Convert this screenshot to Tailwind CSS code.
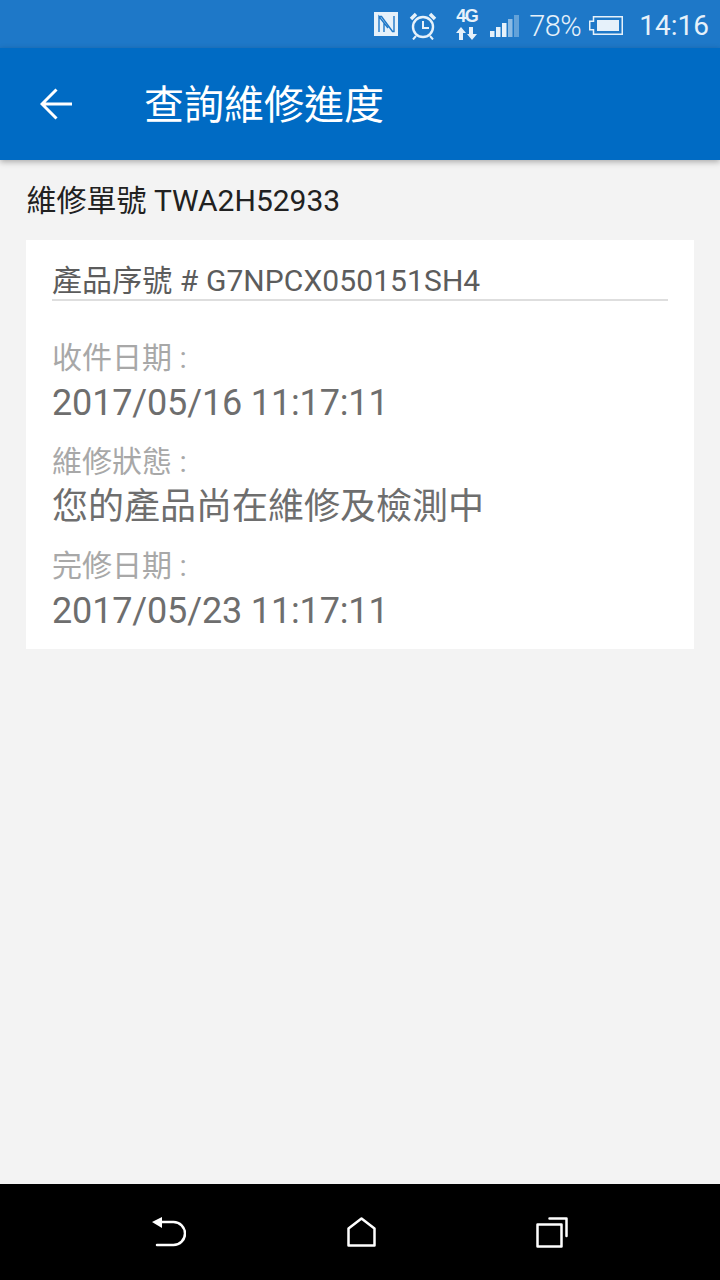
<!DOCTYPE html>
<html lang="zh-Hant">
  <head>
    <meta charset="UTF-8" />
    <meta name="viewport" content="width=device-width, initial-scale=1.0" />
    <title>查詢維修進度</title>
    <script src="https://cdn.jsdelivr.net/npm/@tailwindcss/browser@4"></script>
  </head>
  <body class="bg-[#f3f3f3] font-['Roboto','Noto_Sans_CJK_TC',sans-serif]">
    <div class="flex flex-col w-[720px] h-[1280px] overflow-hidden">
      <!-- status bar -->
      <div class="h-12 bg-[#1e78c8] flex items-center justify-end text-[#e6f1fa] shrink-0">
        <svg class="w-6 h-6 mr-[11px]" viewBox="0 0 24 24" fill="none">
          <path fill="currentColor" d="M0 0h24v24H0z" />
          <path stroke="#1e78c8" stroke-width="1.400" d="M5 20V4.500l9 11.500M5 4.500h2.500l11 15H20V4M10 20V11" />
        </svg>
        <svg class="w-7 h-7 mr-[19px] mt-1" viewBox="0 0 28 28" fill="none" stroke="currentColor">
          <circle cx="14" cy="15" r="10" stroke-width="2.400" />
          <path stroke-width="2" d="M14 9v7h6M7 24l-3 3.500M21 24l3 3.500" />
          <path stroke-width="3.500" d="M2 7l5-5M26 7l-5-5" />
        </svg>
        <div class="flex flex-col items-center w-[21px] mr-[13px] gap-1 mt-[2px]">
          <span class="text-[18px] leading-[13px] font-bold font-['Liberation_Sans'] tracking-[-1.5px]">4G</span>
          <svg class="w-[21px] h-[13px]" viewBox="0 0 21 13" fill="currentColor">
            <path d="M5 0l5 6H7v7H3V6H0zM13 0h4v7h4l-5 6-5-6h2z" />
          </svg>
        </div>
        <svg class="w-[29px] h-[22px] mr-[10px] mt-1" viewBox="0 0 29 22" fill="currentColor">
          <path d="M0 16h4.500v6H0zM6 12h4.500v10H6zM12 8h4.500v14H12z" />
          <path opacity="0.55" d="M18 4h4.500v18H18z" />
          <path opacity="0.35" d="M24 0h5v22h-5z" />
        </svg>
        <span class="text-[29px] leading-none font-light tracking-[-0.5px] mr-2 mt-1">78%</span>
        <svg class="w-[34px] h-[19px] mr-4 mt-[3px]" viewBox="0 0 34 19" fill="none">
          <path stroke="currentColor" stroke-width="1.500" d="M4.500 0.750h28.750v17.500H4.500v-4.500H0.750v-8.500H4.500z" />
          <path fill="currentColor" d="M8 4h22v11H8z" />
        </svg>
        <span class="text-[28px] leading-none mr-[11px] mt-1">14:16</span>
      </div>

      <!-- app bar -->
      <div class="h-[112px] bg-[#006bc4] flex items-center shrink-0 shadow-[0_2px_6px_rgba(0,0,0,0.3)] relative">
        <svg class="w-8 h-8 ml-10" viewBox="0 0 32 32" fill="none" stroke="#fff" stroke-width="3">
          <path d="M32 16H3M16.500 1.500L2 16l14.500 14.500" />
        </svg>
        <h1 class="ml-[72px] pt-1 text-[40px] leading-none text-white">查詢維修進度</h1>
      </div>

      <!-- content -->
      <div class="flex-1 px-[26px]">
        <div class="text-[30px] leading-[40px] text-[#212121] mt-[21px] ml-[0.5px]">維修單號 TWA2H52933</div>
        <div class="bg-white mt-[19px] h-[409px] px-[26px] pt-[22px]">
          <div class="text-[30px] leading-[37px] tracking-[0.08px] text-[#5c5c5c] border-b-2 border-[#dedede]">產品序號 # G7NPCX050151SH4</div>
          <div class="mt-[37px] text-[30px] leading-[40px] text-[#a8a8a8]">收件日期 :</div>
          <div class="text-[36px] leading-[50px] tracking-[-0.15px] text-[#6e6e6e]">2017/05/16 11:17:11</div>
          <div class="mt-[14px] text-[30px] leading-[40px] text-[#a8a8a8]">維修狀態 :</div>
          <div class="text-[36px] leading-[50px] text-[#6e6e6e]">您的產品尚在維修及檢測中</div>
          <div class="mt-[14px] text-[30px] leading-[40px] text-[#a8a8a8]">完修日期 :</div>
          <div class="text-[36px] leading-[50px] tracking-[-0.15px] text-[#6e6e6e]">2017/05/23 11:17:11</div>
        </div>
      </div>

      <!-- nav bar -->
      <div class="h-24 bg-black flex items-center justify-between px-[152px] shrink-0">
        <svg class="w-[34px] h-[30px]" viewBox="0 0 34 30" fill="none" stroke="#fff" stroke-width="2.500" stroke-linecap="round" stroke-linejoin="round">
          <path d="M8 5h13.500a11.500 11.500 0 0 1 0 23H5" />
          <path fill="#fff" stroke="none" d="M0 5L10 0v11z" />
        </svg>
        <svg class="w-[29px] h-[30px]" viewBox="0 0 29 30" fill="none" stroke="#fff" stroke-width="2.500" stroke-linejoin="round">
          <path d="M1.500 11.500L14.500 1.500l13 10v17h-26z" />
        </svg>
        <svg class="w-8 h-[31px]" viewBox="0 0 32 31" fill="none" stroke="#fff" stroke-width="2.500" stroke-linecap="round" stroke-linejoin="round">
          <path d="M1.500 7.500h24v22h-24zM13.500 1.500h17V19" />
        </svg>
      </div>
    </div>
  </body>
</html>
